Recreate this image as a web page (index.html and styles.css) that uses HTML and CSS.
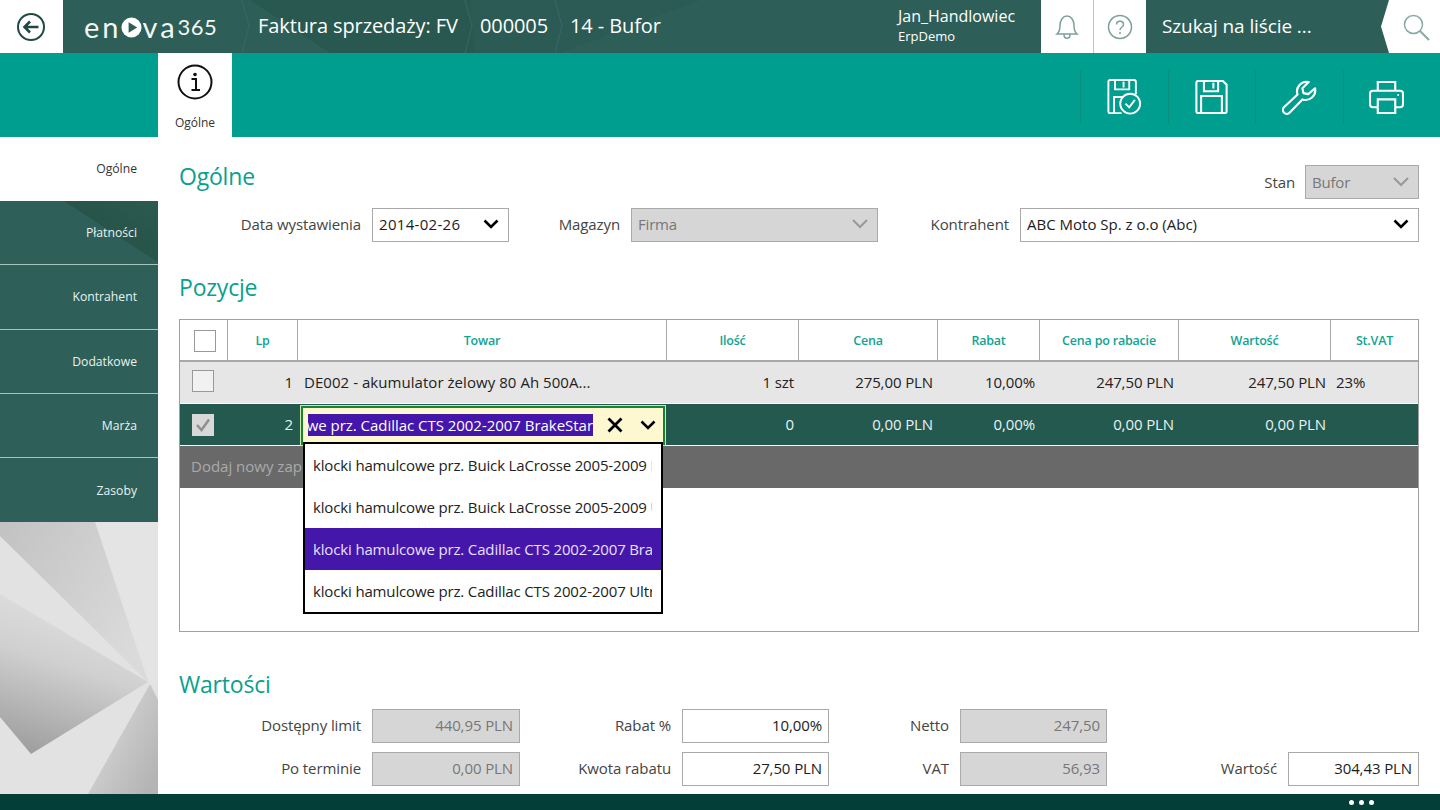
FILE: index.html
```html
<!DOCTYPE html>
<html lang="pl">
<head>
<meta charset="utf-8">
<title>enova365</title>
<link rel="stylesheet" href="styles.css">
</head>
<body>
<div class="app">
  <header class="topbar">
    <svg class="top-facets" viewBox="0 0 1440 53" width="1440" height="53" aria-hidden="true">
      <polygon points="250,0 470,0 475,53 330,53" fill="#295851"/>
      <polygon points="470,0 700,0 560,53 475,53" fill="#2b5b54"/>
      <polyline points="242,0 249,26 242,53" fill="none" stroke="#386862"/>
      <polyline points="465,0 472,26 465,53" fill="none" stroke="#386862"/>
      <polyline points="555,0 562,26 555,53" fill="none" stroke="#386862"/>
    </svg>
    <a class="back">
      <svg width="30" height="30" viewBox="0 0 30 30"><circle cx="15" cy="15" r="13" fill="none" stroke="#1f4a44" stroke-width="2"/><path d="M22.5 15H8.5M14 9.5L8.5 15L14 20.5" fill="none" stroke="#1f4a44" stroke-width="2.6"/></svg>
    </a>
    <div class="logo">
      <span>en</span>
      <svg class="logo-o" width="21" height="21" viewBox="0 0 22 22"><circle cx="11" cy="11" r="10.5" fill="#fff"/><path d="M8 5.5L17 11L8 16.5Z" fill="#2e5e58"/></svg>
      <span>va</span>
      <span class="logo-num">365</span>
    </div>
    <nav class="crumbs">
      <span class="crumb-a">Faktura sprzedaży: FV</span>
      <span class="crumb-b">000005</span>
      <span>14 - Bufor</span>
    </nav>
    <div class="user">
      <div class="user-name">Jan_Handlowiec</div>
      <div class="user-db">ErpDemo</div>
    </div>
    <a class="top-btn">
      <svg width="26" height="28" viewBox="0 0 26 28"><path d="M3 21c2.500-2 3-4 3-8.500C6 7 9 3 13 3s7 4 7 9.500c0 4.500.5 6.500 3 8.500ZM10 21.500c0 5 6 5 6 0" fill="none" stroke="#7d9f9a" stroke-width="1.500"/></svg>
    </a>
    <a class="top-btn top-btn-help">
      <svg width="26" height="26" viewBox="0 0 26 26"><circle cx="13" cy="13" r="11.500" fill="none" stroke="#7d9f9a" stroke-width="1.500"/><path d="M9.500 10.500c0-4.500 7-4.500 7 0c0 3-3.500 2.500-3.500 5.500" fill="none" stroke="#7d9f9a" stroke-width="1.500"/><circle cx="13" cy="19" r="1" fill="#7d9f9a"/></svg>
    </a>
    <div class="search">Szukaj na liście ...</div>
    <a class="search-btn">
      <svg width="28" height="28" viewBox="0 0 28 28"><circle cx="11.500" cy="11.500" r="9" fill="none" stroke="#8aa9a5" stroke-width="1.500"/><path d="M18 18L27 27" stroke="#8aa9a5" stroke-width="2"/></svg>
    </a>
  </header>

  <section class="ribbon">
    <div class="ribbon-tab">
      <svg width="36" height="36" viewBox="0 0 36 36"><circle cx="18" cy="18" r="16.500" fill="none" stroke="#111" stroke-width="2"/><circle cx="18" cy="10.500" r="1.800" fill="#111"/><path d="M14.500 15H19V25M14.500 26H23" fill="none" stroke="#111" stroke-width="2"/></svg>
      <span>Ogólne</span>
    </div>
    <div class="tools">
      <a class="tool">
        <svg width="35" height="36" viewBox="0 0 36 38" fill="none" stroke="#fff" stroke-width="2"><path d="M15 36H3a2 2 0 0 1-2-2V3a2 2 0 0 1 2-2h25a2 2 0 0 1 2 2v13"/><path d="M8 1v10h15V1M17 3v6M7 36V19h10"/><circle cx="24" cy="26" r="10.500"/><path d="M19 26l4 4l6-8"/></svg>
      </a>
      <a class="tool">
        <svg width="33" height="34" viewBox="0 0 34 36" fill="none" stroke="#fff" stroke-width="2.200"><path d="M3 1h26l4 4v28a2 2 0 0 1-2 2H3a2 2 0 0 1-2-2V3a2 2 0 0 1 2-2Z"/><path d="M9 1v11h15V1M19 3v6M6 35V17h22v18"/></svg>
      </a>
      <a class="tool">
        <svg width="35" height="35" viewBox="0 0 36 36" fill="none" stroke="#fff" stroke-width="2.200"><path d="M34 8.500a10 10 0 0 1-13 11.500L8 33.500a4 4 0 0 1-6-5.500L16 15A10 10 0 0 1 27.500 2L21 8.500l1 5l5 1Z" stroke-linejoin="round"/></svg>
      </a>
      <a class="tool">
        <svg width="35" height="33" viewBox="0 0 36 34" fill="none" stroke="#fff" stroke-width="2.200"><path d="M9 10V1h18v9"/><path d="M9 27H4a3 3 0 0 1-3-3V13a3 3 0 0 1 3-3h28a3 3 0 0 1 3 3v11a3 3 0 0 1-3 3h-5"/><path d="M9 19h18v14H9Z"/><circle cx="30" cy="14.500" r="1" fill="#fff" stroke="none"/></svg>
      </a>
    </div>
  </section>

  <div class="main">
    <aside class="sidebar">
      <a class="side-tab side-tab-active">Ogólne</a>
      <a class="side-tab side-tab-accent">Płatności</a>
      <a class="side-tab">Kontrahent</a>
      <a class="side-tab">Dodatkowe</a>
      <a class="side-tab">Marża</a>
      <a class="side-tab side-tab-last">Zasoby</a>
      <svg class="side-art" viewBox="0 0 158 272" preserveAspectRatio="none" aria-hidden="true">
        <defs>
          <linearGradient id="fa" x1="0" y1="0" x2="1" y2="0.6"><stop offset="0" stop-color="#c2c2c2"/><stop offset="1" stop-color="#dadada"/></linearGradient>
          <linearGradient id="fb" x1="0.6" y1="0" x2="0.3" y2="1"><stop offset="0" stop-color="#e2e2e2"/><stop offset="0.45" stop-color="#d0d0d0"/><stop offset="1" stop-color="#a0a0a0"/></linearGradient>
          <linearGradient id="fc" x1="0" y1="0" x2="1" y2="0.8"><stop offset="0" stop-color="#e0e0e0"/><stop offset="1" stop-color="#b4b4b4"/></linearGradient>
        </defs>
        <rect width="158" height="272" fill="#e2e2e2"/>
        <polygon points="95,0 158,0 158,162 150,162" fill="#e4e4e4"/>
        <polygon points="0,0 95,0 148,160 0,14" fill="url(#fa)"/>
        <polygon points="0,72 148,160 31,232 0,195" fill="url(#fb)"/>
        <polygon points="150,162 88,272 158,272 158,178" fill="url(#fc)"/>
      </svg>
    </aside>

    <main class="content">
      <div class="head-row">
        <h2 class="title">Ogólne</h2>
        <div class="stan">
          <span class="label">Stan</span>
          <div class="field field-off field-stan"><span>Bufor</span><svg class="chev" width="16" height="10" viewBox="0 0 16 10"><path d="M1 1l7 7l7-7" fill="none" stroke="#999" stroke-width="2"/></svg></div>
        </div>
      </div>
      <div class="form-row">
        <span class="label lab">Data wystawienia</span>
        <div class="field"><span class="date">2014-02-26</span><svg class="chev" width="16" height="10" viewBox="0 0 16 10"><path d="M1.500 1.500L8 8l6.500-6.500" fill="none" stroke="#000" stroke-width="2.600"/></svg></div>
        <span class="label lab">Magazyn</span>
        <div class="field field-off"><span>Firma</span><svg class="chev" width="16" height="10" viewBox="0 0 16 10"><path d="M1 1l7 7l7-7" fill="none" stroke="#999" stroke-width="2"/></svg></div>
        <span class="label lab">Kontrahent</span>
        <div class="field"><span>ABC Moto Sp. z o.o (Abc)</span><svg class="chev" width="16" height="10" viewBox="0 0 16 10"><path d="M1.500 1.500L8 8l6.500-6.500" fill="none" stroke="#000" stroke-width="2.600"/></svg></div>
      </div>

      <h2 class="title title-pos">Pozycje</h2>
      <div class="table">
        <div class="row row-head">
          <div class="cell cell-check"><span class="box box-head"></span></div>
          <div class="cell">Lp</div>
          <div class="cell">Towar</div>
          <div class="cell">Ilość</div>
          <div class="cell">Cena</div>
          <div class="cell">Rabat</div>
          <div class="cell">Cena po rabacie</div>
          <div class="cell">Wartość</div>
          <div class="cell">St.VAT</div>
        </div>
        <div class="row row-light">
          <div class="cell cell-check"><span class="box"></span></div>
          <div class="cell num">1</div>
          <div class="cell txt">DE002 - akumulator żelowy 80 Ah 500A...</div>
          <div class="cell num">1 szt</div>
          <div class="cell num">275,00 PLN</div>
          <div class="cell num">10,00%</div>
          <div class="cell num">247,50 PLN</div>
          <div class="cell num">247,50 PLN</div>
          <div class="cell vat">23%</div>
        </div>
        <div class="row row-dark">
          <div class="cell cell-check"><span class="box box-on"><svg width="18" height="16" viewBox="0 0 18 16"><path d="M3 8l4.500 5L15 2.500" fill="none" stroke="#8f8f8f" stroke-width="2.500"/></svg></span></div>
          <div class="cell num">2</div>
          <div class="cell cell-edit">
            <div class="editor">
              <div class="editor-text"><span class="selected">klocki hamulcowe prz. Cadillac CTS 2002-2007 BrakeStar</span></div>
              <svg class="editor-x" width="16" height="16" viewBox="0 0 16 16"><path d="M1.500 1.500l13 13M14.500 1.500l-13 13" stroke="#000" stroke-width="2.800"/></svg>
              <svg class="editor-chev" width="16" height="10" viewBox="0 0 16 10"><path d="M1.500 1.500L8 8l6.500-6.500" fill="none" stroke="#000" stroke-width="2.600"/></svg>
            </div>
          </div>
          <div class="cell num">0</div>
          <div class="cell num">0,00 PLN</div>
          <div class="cell num">0,00%</div>
          <div class="cell num">0,00 PLN</div>
          <div class="cell num">0,00 PLN</div>
          <div class="cell vat"></div>
        </div>
        <div class="add-row">Dodaj nowy zapis</div>
        <ul class="dropdown">
          <li class="drop-item"><span>klocki hamulcowe prz. Buick LaCrosse 2005-2009 BrakeStar</span></li>
          <li class="drop-item"><span>klocki hamulcowe prz. Buick LaCrosse 2005-2009 Ultra</span></li>
          <li class="drop-item drop-item-on"><span>klocki hamulcowe prz. Cadillac CTS 2002-2007 BrakeStar</span></li>
          <li class="drop-item"><span>klocki hamulcowe prz. Cadillac CTS 2002-2007 Ultra</span></li>
        </ul>
      </div>

      <h2 class="title title-val">Wartości</h2>
      <div class="val-grid">
        <span class="label lab">Dostępny limit</span>
        <div class="field field-off field-num">440,95 PLN</div>
        <span class="label lab">Rabat %</span>
        <div class="field field-num">10,00%</div>
        <span class="label lab">Netto</span>
        <div class="field field-off field-num">247,50</div>
        <span class="val-empty"></span>
        <span class="label lab">Po terminie</span>
        <div class="field field-off field-num">0,00 PLN</div>
        <span class="label lab">Kwota rabatu</span>
        <div class="field field-num">27,50 PLN</div>
        <span class="label lab">VAT</span>
        <div class="field field-off field-num">56,93</div>
        <span class="label lab">Wartość</span>
        <div class="field field-num">304,43 PLN</div>
      </div>
    </main>
  </div>

  <footer class="footer"><span class="dot"></span><span class="dot"></span><span class="dot"></span></footer>
</div>
</body>
</html>
```

FILE: styles.css
```css
* { box-sizing: border-box; }
html, body { margin: 0; padding: 0; }
body {
  width: 1440px;
  height: 810px;
  overflow: hidden;
  background: #fff;
  font-family: "Open Sans", "Noto Sans", sans-serif;
  font-size: 15px;
  color: #222;
}
.app { display: flex; flex-direction: column; width: 1440px; height: 810px; }

/* top bar */
.topbar {
  position: relative;
  display: flex;
  align-items: stretch;
  height: 53px;
  flex: none;
  background: #2e5e58;
  color: #fff;
}
.top-facets { position: absolute; left: 0; top: 0; }
.back {
  position: relative;
  width: 63px;
  display: flex;
  align-items: center;
  justify-content: center;
  background: #fff;
  padding-right: 2px;
}
.logo {
  position: relative;
  width: 195px;
  padding-left: 21px;
  display: flex;
  align-items: center;
  font-family: "Lato", sans-serif;
  font-size: 29px;
  letter-spacing: 3px;
  color: #f2f7f6;
}
.logo-o { margin: 1px 1px 0 -1px; }
.logo-num { font-size: 22px; letter-spacing: 0.4px; margin-left: 0; font-weight: 400; }
.crumbs {
  position: relative;
  width: 639px;
  padding-bottom: 2px;
  display: flex;
  align-items: center;
  font-size: 20px;
  letter-spacing: -0.1px;
}
.crumb-a { width: 222px; }
.crumb-b { width: 90px; }
.user {
  position: relative;
  width: 144px;
  padding: 6px 0 0 1px;
}
.user-name { font-size: 16px; line-height: 21px; }
.user-db { font-size: 13px; line-height: 18px; }
.top-btn {
  position: relative;
  width: 52px;
  display: flex;
  align-items: center;
  justify-content: center;
  background: #fff;
}
.top-btn-help { width: 53px; border-left: 1px solid #c4c4c4; }
.search {
  position: relative;
  width: 243px;
  padding: 0 0 2px 16px;
  display: flex;
  align-items: center;
  font-size: 19px;
  letter-spacing: -0.1px;
}
.search-btn {
  position: relative;
  flex: 1;
  display: flex;
  align-items: center;
  justify-content: flex-end;
  padding-right: 10px;
  background: #fff;
  margin-left: -8px;
  clip-path: polygon(0 50%, 8px 0, 100% 0, 100% 100%, 8px 100%);
}

/* ribbon */
.ribbon {
  display: flex;
  justify-content: space-between;
  height: 84px;
  flex: none;
  padding-left: 158px;
  background: #009e8e;
}
.ribbon-tab {
  width: 74px;
  background: #fff;
  display: flex;
  flex-direction: column;
  align-items: center;
  padding-top: 11px;
  font-size: 12px;
  color: #333;
}
.ribbon-tab span { margin-top: 14px; line-height: 18px; }
.tools { display: flex; padding: 17px 10px 13px 0; }
.tool {
  width: 87.500px;
  display: flex;
  align-items: center;
  justify-content: center;
  border-left: 1px solid #0a8e80;
}

/* main */
.main { display: flex; flex: 1; min-height: 0; }
.sidebar {
  width: 158px;
  flex: none;
  display: flex;
  flex-direction: column;
  font-size: 12.200px;
}
.side-tab {
  height: 64.200px;
  flex: none;
  display: flex;
  align-items: center;
  justify-content: flex-end;
  padding-right: 21px;
  background: #2e5f58;
  color: #e8f2f0;
  border-bottom: 1px solid #a8c4bf;
}
.side-tab-active { background: #fff; color: #333; border-bottom: 0; padding-bottom: 2px; }
.side-tab-accent { background: linear-gradient(33deg, #2e5f58 63%, #285449 63%, #2b5a52 100%); }
.side-tab-last { border-bottom: 0; }
.side-art { display: block; width: 158px; flex: 1; min-height: 0; }

.content { flex: 1; min-width: 0; padding: 28px 21px 0; }
.head-row {
  display: flex;
  justify-content: space-between;
  height: 34px;
  margin-bottom: 9px;
}
.title {
  margin: 0;
  font-size: 23px;
  font-weight: 400;
  line-height: 36px;
  color: #0a9f8f;
  letter-spacing: -0.2px;
}
.head-row .title { margin-top: -7px; }
.title-pos { height: 77px; padding-top: 27px; }
.title-val { height: 77px; padding-top: 34px; }
.stan { display: flex; align-items: center; gap: 10px; }
.label { color: #444; letter-spacing: -0.1px; }
.lab { display: block; text-align: right; padding-right: 11px; line-height: 32px; }
.field {
  height: 34px;
  display: flex;
  align-items: center;
  justify-content: space-between;
  padding: 0 9px 2px 6px;
  background: #fff;
  border: 1px solid #aaa;
  color: #1c1c1c;
  white-space: nowrap;
}
.date { letter-spacing: 0.3px; }
.field-off { background: #d6d6d6; color: #777; letter-spacing: -0.2px; }
.field-stan { width: 114px; padding-bottom: 1px; }
.field-num { justify-content: flex-end; padding-right: 6px; letter-spacing: -0.1px; }

.form-row {
  display: grid;
  grid-template-columns: 193px 137px 122px 247px 142px 399px;
}
.val-grid {
  display: grid;
  grid-template-columns: 193px 148px 162px 147px 131px 147px 181px 131px;
  row-gap: 9px;
}
.val-empty { grid-column: span 2; }

/* table */
.table {
  position: relative;
  height: 313px;
  border: 1px solid #a0a0a0;
}
.row {
  display: grid;
  grid-template-columns: 48px 70px 369px 132px 139px 102px 139px 152px 1fr;
  height: 41px;
  margin-bottom: 1px;
  white-space: nowrap;
  letter-spacing: -0.1px;
}
.cell { display: flex; align-items: center; min-width: 0; }
.num { justify-content: flex-end; padding: 0 5px 1px 0; }
.txt { padding: 0 0 1px 6px; letter-spacing: 0.05px; }
.vat { padding: 0 0 1px 5px; }
.cell-check { justify-content: center; }
.row-head {
  height: 42px;
  margin-bottom: 0;
  border-bottom: 2px solid #a8a8a8;
  font-size: 12.500px;
  font-weight: 600;
  color: #0fa493;
  letter-spacing: -0.2px;
}
.row-head .cell { justify-content: center; border-right: 1px solid #a8a8a8; padding-top: 1px; }
.row-head .cell:last-child { border-right: 0; }
.row-light { background: #e6e6e6; color: #222; }
.row-dark { background: #245950; color: #e8f2f0; }
.box {
  display: block;
  width: 22px;
  height: 22px;
  border: 1px solid #999;
  background: #fff;
  margin-right: 2px;
}
.row-head .box-head { margin: 0 0 0 2px; }
.row-light .box { background: #f1f1f1; margin: 0 2px 3px 0; }
.box-on {
  background: #d8d8d8;
  border-color: #d8d8d8;
  display: flex;
  align-items: center;
  justify-content: center;
}
.cell-edit { padding: 2px 2px 0 3px; }
.editor {
  width: 100%;
  height: 39px;
  display: flex;
  align-items: center;
  padding: 0 0 1px 5px;
  background: #fdf8cf;
  border: 2px solid #18842f;
  outline: 1px solid #cfe8a8;
  color: #000;
  letter-spacing: -0.03px;
}
.editor-text {
  width: 285px;
  display: flex;
  justify-content: flex-end;
  overflow: hidden;
}
.selected {
  flex: none;
  padding: 1px 0;
  background: #4416a9;
  color: #fff;
}
.editor-x { margin-left: 14px; }
.editor-chev { margin-left: 17px; }
.add-row {
  height: 42px;
  display: flex;
  align-items: center;
  padding: 0 0 2px 11px;
  background: #696969;
  color: #a9a9a9;
}
.dropdown {
  position: absolute;
  left: 123px;
  top: 122px;
  width: 360px;
  margin: 0;
  padding: 0;
  list-style: none;
  background: #fff;
  border: 2px solid #000;
}
.drop-item {
  height: 42px;
  padding: 0 9px 0 8px;
  display: flex;
  align-items: center;
  white-space: nowrap;
  letter-spacing: -0.15px;
  color: #222;
}
.drop-item span { display: block; width: 100%; overflow: hidden; }
.drop-item-on { background: #4416a9; color: #e8e0ff; }

/* footer */
.footer {
  height: 16px;
  flex: none;
  display: flex;
  align-items: center;
  justify-content: flex-end;
  gap: 5px;
  padding: 0 66px 0 0;
  background: #033f38;
}
.dot { width: 5px; height: 5px; border-radius: 50%; background: #fff; }
```
